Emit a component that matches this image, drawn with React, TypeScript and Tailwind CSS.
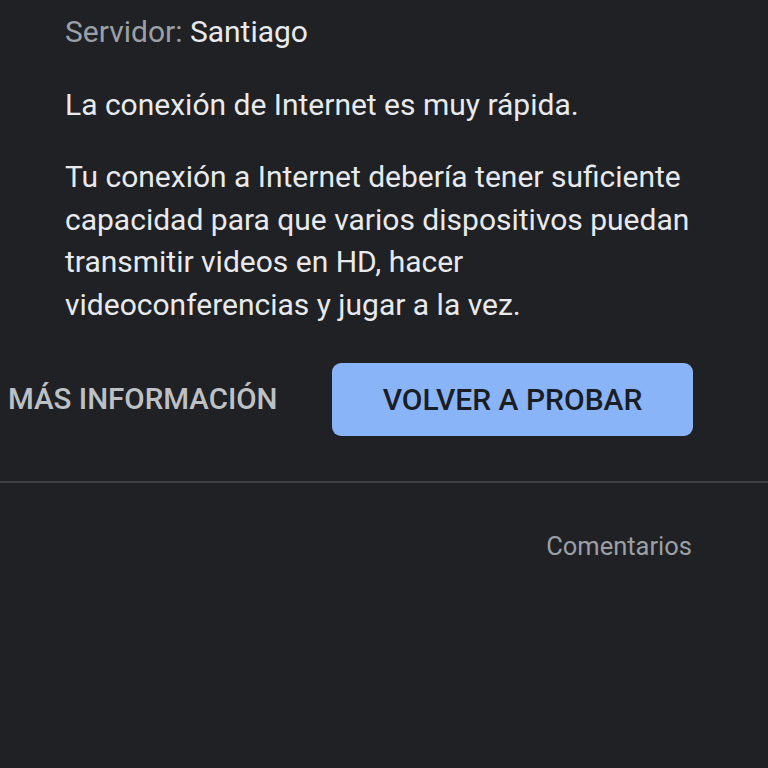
export default function App() {
  return (
    <div
      className="w-[768px] h-[768px] overflow-hidden bg-[#202124] text-[#e8eaed]"
      style={{ fontFamily: "Roboto, 'Noto Sans', sans-serif" }}
    >
      <div className="pl-[65px] pr-[72px] pt-[11px] text-[30px] leading-[42.5px]">
        <p>
          <span className="text-[#9aa0a6]">Servidor:</span> Santiago
        </p>
        <p className="mt-[30px]">La conexión de Internet es muy rápida.</p>
        <p className="mt-[30px]">
          Tu conexión a Internet debería tener suficiente capacidad para que varios dispositivos puedan
          transmitir videos en HD, hacer videoconferencias y jugar a la vez.
        </p>
      </div>

      <div className="flex items-center mt-[37px] pl-[8px]">
        <button className="text-[29.5px] font-medium text-[#bdc1c6]">MÁS INFORMACIÓN</button>
        <button className="ml-auto mr-[75px] w-[361px] h-[73px] rounded-[9px] bg-[#8ab4f8] text-[#1a1d24] text-[30px] font-medium">
          VOLVER A PROBAR
        </button>
      </div>

      <div className="mt-[45px] h-[2px] bg-[#3c4043]" />

      <div className="flex justify-end pr-[76px] mt-[44px]">
        <span className="text-[25.5px] text-[#9aa0a6]">Comentarios</span>
      </div>
    </div>
  );
}
